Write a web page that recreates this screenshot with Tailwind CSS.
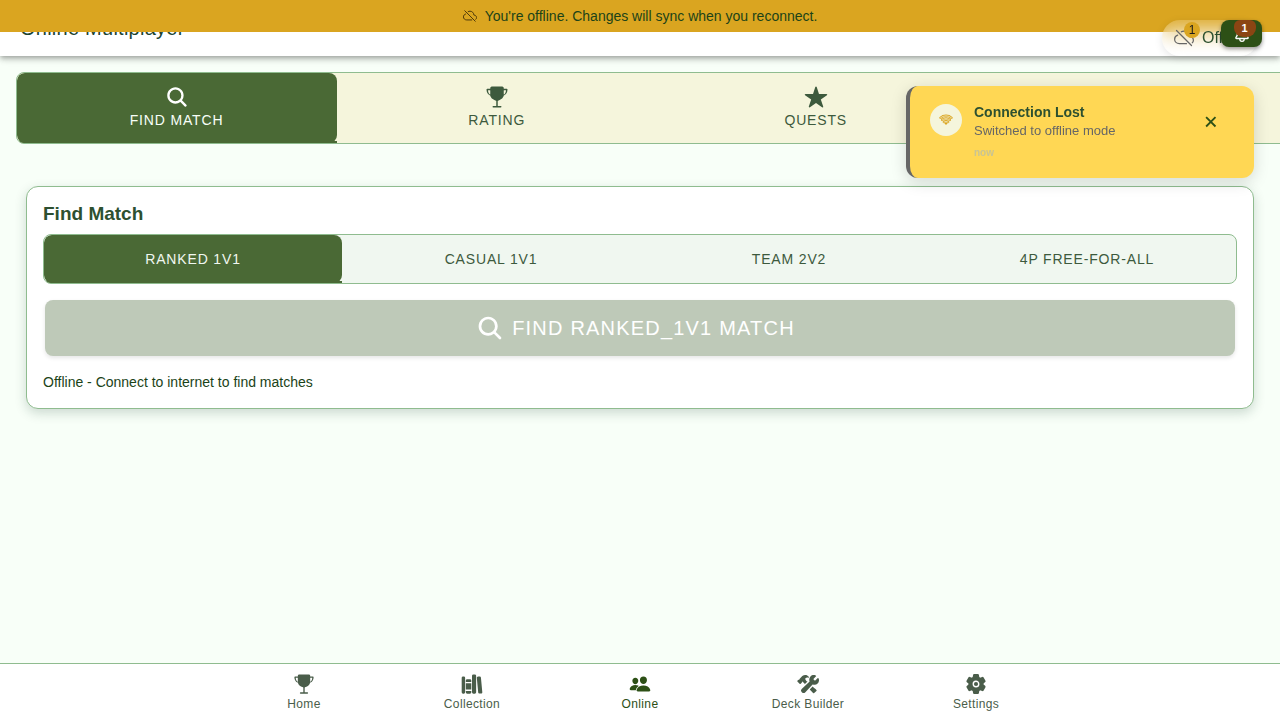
<!DOCTYPE html>
<html lang="en">
<head>
<meta charset="utf-8">
<title>Online Multiplayer</title>
<script src="https://cdn.jsdelivr.net/npm/@tailwindcss/browser@4"></script>
</head>
<body class="h-[720px] w-[1280px] overflow-hidden bg-[#f8fff8] font-['Liberation_Sans',Arial,sans-serif] text-[#1b4318]">
<svg class="hidden">
  <symbol id="search" viewBox="0 0 512 512"><path d="M456.69 421.39L362.6 327.3a173.81 173.81 0 0034.84-104.58C397.44 126.38 319.06 48 222.72 48S48 126.38 48 222.72s78.38 174.72 174.72 174.72A173.81 173.81 0 00327.3 362.6l94.09 94.09a25 25 0 0035.3-35.3zM97.92 222.72a124.8 124.8 0 11124.8 124.8 124.95 124.95 0 01-124.8-124.8z"/></symbol>
  <symbol id="trophy" viewBox="0 0 512 512"><path d="M464 80H403.9a4 4 0 01-4-4V64a32 32 0 00-32-32H144.37a32 32 0 00-32 32v12a4 4 0 01-4 4H48a16 16 0 00-16 16c0 54.53 30 112.45 76.52 125.35a7.82 7.82 0 015.55 5.9c5.77 26.89 23.52 52.5 51.41 73.61 20.91 15.83 45.85 27.5 68.27 32.48a8 8 0 016.25 7.8V444a4 4 0 01-4 4h-59.55c-8.61 0-16 6.62-16.43 15.23A16 16 0 00176 480h159.55c8.61 0 16-6.62 16.43-15.23A16 16 0 00336 448h-60a4 4 0 01-4-4V341.14a8 8 0 016.25-7.8c22.42-5 47.36-16.65 68.27-32.48 27.89-21.11 45.64-46.72 51.41-73.61a7.82 7.82 0 015.55-5.9C450 208.45 480 150.53 480 96a16 16 0 00-16-16zM112 198.22a4 4 0 01-6 3.45c-10.26-6.11-17.75-15.37-22.14-21.89-11.91-17.69-19-40.67-19.79-63.63a4 4 0 014-4.15h40a4 4 0 014 4zm316.13-18.44c-4.39 6.52-11.87 15.78-22.13 21.89a4 4 0 01-6-3.46V116a4 4 0 014-4h40a4 4 0 014 4.15c-.79 22.96-7.9 45.94-19.87 63.63z"/></symbol>
  <symbol id="star" viewBox="0 0 512 512"><path d="M394 480a16 16 0 01-9.39-3L256 383.76 127.39 477a16 16 0 01-24.55-18.08L153 310.35 23 221.2a16 16 0 019-29.2h160.38l48.4-148.95a16 16 0 0130.44 0l48.4 149H480a16 16 0 019.05 29.2L359 310.35l50.13 148.53A16 16 0 01394 480z"/></symbol>
  <symbol id="people" viewBox="0 0 512 512"><path d="M336 256c-20.56 0-40.44-9.18-56-25.84-15.13-16.25-24.37-37.92-26-61-1.74-24.62 5.77-47.26 21.14-63.76S312 80 336 80c23.83 0 45.38 9.06 60.7 25.52 15.47 16.62 23 39.22 21.26 63.63-1.67 23.11-10.9 44.77-26 61C376.44 246.82 356.57 256 336 256zM467.83 432H204.18a27.71 27.71 0 01-22-10.67 30.22 30.22 0 01-5.26-25.79c8.42-33.81 29.28-61.85 60.32-81.08C264.79 297.4 299.86 288 336 288c36.85 0 71 9 98.71 26.05 31.11 19.13 52 47.33 60.38 81.55a30.27 30.27 0 01-5.32 25.78A27.68 27.68 0 01467.83 432zM147 260c-35.19 0-66.13-32.72-69-72.93-1.42-20.6 5-39.65 18-53.62 12.86-13.83 31-21.45 51-21.45s38 7.66 50.93 21.57c13.1 14.08 19.5 33.09 18 53.52-2.87 40.2-33.8 72.91-68.93 72.91zM212.66 291.45c-17.59-8.6-40.42-12.9-65.65-12.9-29.46 0-58.07 7.68-80.57 21.62C40.93 316 23.77 339.05 16.84 366.88a27.39 27.39 0 004.79 23.36A25.32 25.32 0 0041.72 400h111a8 8 0 007.87-6.57c.11-.63.25-1.26.41-1.88 8.48-34.06 28.35-62.84 57.71-83.82a8 8 0 00-.63-13.39c-1.57-.92-3.37-1.89-5.42-2.89z"/></symbol>
  <symbol id="library" viewBox="0 0 512 512"><path d="M64 480H48a32 32 0 01-32-32V112a32 32 0 0132-32h16a32 32 0 0132 32v336a32 32 0 01-32 32zM240 176a32 32 0 00-32-32h-64a32 32 0 00-32 32v28a4 4 0 004 4h120a4 4 0 004-4zM112 448a32 32 0 0032 32h64a32 32 0 0032-32v-30a2 2 0 00-2-2H114a2 2 0 00-2 2zM114 240h124a2 2 0 012 2v140a2 2 0 01-2 2H114a2 2 0 01-2-2V242a2 2 0 012-2zM320 480h-32a32 32 0 01-32-32V64a32 32 0 0132-32h32a32 32 0 0132 32v384a32 32 0 01-32 32zM495.89 445.45l-32.23-340c-1.48-15.65-16.94-27-34.53-25.31l-31.85 3c-17.59 1.67-30.65 15.71-29.17 31.36l32.23 340c1.48 15.65 16.94 27 34.53 25.31l31.85-3c17.59-1.67 30.65-15.71 29.17-31.36z"/></symbol>
  <symbol id="construct" viewBox="0 0 512 512"><path d="M503.58 126.2a16.85 16.85 0 00-27.07-4.55l-51.15 51.15a11.15 11.15 0 01-15.66 0l-22.48-22.48a11.17 11.17 0 010-15.67l50.88-50.89a16.85 16.85 0 00-5.27-27.4c-39.71-17.37-89.08-7.45-120 23.29-26.81 26.61-34.83 68-22 113.7a11 11 0 01-3.16 11.1L114.77 365.1a56.76 56.76 0 1080.14 80.18L357 272.08a11 11 0 0110.9-3.17c45 12 86 4 112.43-22 15.2-15 25.81-36.17 29.89-59.71 3.83-22.2 1.41-44.44-6.64-61zM437.33 378.41c-13.94-11.59-43.72-38.4-74.07-66.22l-66.07 70.61c28.24 30 53.8 57.85 65 70l15.2 15.2a16 16 0 0022.6 0l52-52a16 16 0 000-22.6zM118.54 214.55a20.48 20.48 0 00-3-10.76 2.76 2.76 0 012.62-4.22c.9.09 5.39.74 11.76 4.61 4.73 2.87 18.23 12.08 41.73 35.54l7.22 22.12 66.23-61.55a33.73 33.73 0 00-21.6-9.2l-.86-.95-24.54-33.84a28.45 28.45 0 01-4-26.11 35.23 35.23 0 0111.78-16.35c5.69-4.41 18.53-9.72 29.44-10.62a52.92 52.92 0 0119.19 1.94 65.57 65.57 0 017.09 2.54 13 13 0 0013.15-21.09C265 76 254 66 239 56 205 40 160 40 123 71L64 131c-9 8-6 22-17 26-8 2-14 2-20 7l-13 13c-9 9-9 18 0 27l46 46c8 8 18 8 26 0l13-13c7-6 9-12 19.54-22.45z"/></symbol>
  <symbol id="settings" viewBox="0 0 512 512"><circle cx="256" cy="256" r="48"/><path d="M470.39 300l-.47-.38-31.56-24.75a16.11 16.11 0 01-6.1-13.33v-11.56a16 16 0 016.11-13.22L469.92 212l.47-.38a26.68 26.68 0 005.9-34.06l-42.71-73.9a1.59 1.59 0 01-.13-.22A26.86 26.86 0 00401 92.14l-.35.13-37.1 14.93a15.94 15.94 0 01-14.47-1.29q-4.92-3.1-10-5.86a15.94 15.94 0 01-8.19-11.82l-5.59-39.59-.12-.72A27.22 27.22 0 00298.76 26h-85.52a26.92 26.92 0 00-26.45 22.39l-.09.56-5.57 39.67a16 16 0 01-8.13 11.82 175.21 175.21 0 00-10 5.82 15.92 15.92 0 01-14.43 1.27l-37.13-15-.35-.14a26.87 26.87 0 00-32.48 11.34l-.13.22-42.77 73.95a26.71 26.71 0 005.9 34.1l.47.38 31.56 24.75a16.11 16.11 0 016.1 13.33v11.56a16 16 0 01-6.11 13.22L42.08 300l-.47.38a26.68 26.68 0 00-5.9 34.06l42.71 73.9a1.59 1.59 0 01.13.22 26.86 26.86 0 0032.45 11.3l.35-.13 37.07-14.93a15.94 15.94 0 0114.47 1.29q4.92 3.11 10 5.86a15.94 15.94 0 018.19 11.82l5.56 39.59.12.72A27.22 27.22 0 00213.24 486h85.52a26.92 26.92 0 0026.45-22.39l.09-.56 5.57-39.67a16 16 0 018.18-11.82c3.42-1.84 6.76-3.79 10-5.82a15.92 15.92 0 0114.43-1.27l37.13 14.95.35.14a26.85 26.85 0 0032.48-11.34 2.53 2.53 0 01.13-.22l42.71-73.89a26.7 26.7 0 00-5.89-34.11zm-134.48-40.24a80 80 0 11-83.66-83.67 80.21 80.21 0 0183.66 83.67z"/></symbol>
  <symbol id="cloud-offline" viewBox="0 0 512 512"><path fill="none" stroke="currentColor" stroke-width="32" stroke-linecap="round" stroke-linejoin="round" d="M93.72 183.25C49.49 198.05 16 233.1 16 288c0 66 54 112 120 112h184.37M467.82 377.22C485.24 363.93 496 341.42 496 312c0-59.82-53-85.76-96-88-8.89-89.54-71-144-144-144-26.16 0-48.79 6.93-67.6 18.14M448 448L64 64"/></symbol>
  <symbol id="wifi" viewBox="0 0 512 512"><g fill="none" stroke-linecap="round"><path stroke="currentColor" stroke-width="86" d="M332 330a115 115 0 00-152 0M394 254a205 205 0 00-276 0M458 176a300 300 0 00-404 0"/><path stroke="#f5f5dc" stroke-width="26" d="M332 330a115 115 0 00-152 0M394 254a205 205 0 00-276 0M458 176a300 300 0 00-404 0"/></g><path d="M315 376L256 440l-59-64a80 80 0 01118 0z"/></symbol>
  <symbol id="bell" viewBox="0 0 512 512"><path fill="none" stroke="currentColor" stroke-width="36" stroke-linecap="round" stroke-linejoin="round" d="M427.68 351.43C402 320 383.87 304 383.87 217.35 383.87 138 343.35 109.73 310 96c-4.43-1.82-8.6-6-9.95-10.55C294.2 65.54 277.8 48 256 48s-38.21 17.55-44 37.47c-1.35 4.6-5.52 8.71-9.95 10.53-33.39 13.75-73.87 41.92-73.87 121.35C128.13 304 110 320 84.32 351.43 73.68 364.45 83 384 101.61 384h308.88c18.51 0 27.77-19.61 17.19-32.57zM320 384v16a64 64 0 01-128 0v-16"/></symbol>
  <symbol id="close" viewBox="0 0 512 512"><path fill="none" stroke="currentColor" stroke-width="58" d="M400 400L100 100M400 100L100 400"/></symbol>
</svg>

<div class="relative flex h-full flex-col">
  <header class="relative z-10 flex h-14 shrink-0 items-center bg-white px-5 shadow-[0_2px_4px_-1px_rgba(0,0,0,0.2),0_4px_5px_0_rgba(0,0,0,0.14),0_1px_10px_0_rgba(0,0,0,0.12)]">
    <h1 class="text-[20px] font-medium tracking-[0.0125em] text-[#1b4332]">Online Multiplayer</h1>
  </header>

  <main class="flex-1 pt-4">
    <div class="ml-4 grid h-[72px] w-[1280px] grid-cols-4 overflow-hidden rounded-lg border border-[#8fbc8f] bg-[#f5f5dc] text-[14px] font-medium tracking-[0.06em] text-[#3d5a3d]">
      <div class="relative flex w-[320px] flex-col items-center rounded-lg bg-[#4a6935] pt-3 text-[#f8fff8]">
        <svg class="size-6 fill-current text-white"><use href="#search"/></svg><span class="mt-px mr-px leading-5">FIND MATCH</span>
        <span class="absolute inset-x-0 bottom-0 h-0.5 bg-[#4a6935]"></span>
      </div>
      <div class="flex flex-col items-center pt-3 pl-px"><svg class="size-6 fill-current"><use href="#trophy"/></svg><span class="mt-px leading-5">RATING</span></div>
      <div class="flex flex-col items-center pt-3"><svg class="size-6 fill-current"><use href="#star"/></svg><span class="mt-px leading-5">QUESTS</span></div>
      <div class="flex flex-col items-center pt-3"><svg class="size-6 fill-current"><use href="#star"/></svg></div>
    </div>

    <section class="mx-[26px] mt-[42px] h-[223px] rounded-xl border border-[#8fbc8f] bg-white px-4 pt-[15px] shadow-[0_4px_12px_rgba(27,67,50,0.2)]">
      <h2 class="text-[19px] leading-[23px] font-bold text-[#2d5030]">Find Match</h2>
      <div class="mt-[9px] grid h-[50px] grid-cols-4 overflow-hidden rounded-lg border border-[#8fbc8f] bg-[#f0f7f0] text-[14px] font-medium tracking-[0.06em] text-[#3d5a3d]">
        <div class="relative flex items-center justify-center rounded-lg bg-[#4a6935] text-[#f0f7f0]">RANKED 1V1<span class="absolute inset-x-0 bottom-0 h-0.5 bg-[#4a6935]"></span></div>
        <div class="flex items-center justify-center">CASUAL 1V1</div>
        <div class="flex items-center justify-center">TEAM 2V2</div>
        <div class="flex items-center justify-center">4P FREE-FOR-ALL</div>
      </div>
      <button class="mx-0.5 mt-4 flex h-14 w-[1190px] items-center justify-center gap-2 rounded-lg bg-[#bec9b8] pr-[9px] text-[20px] font-medium tracking-[0.06em] text-white shadow-[0_2px_4px_rgba(0,0,0,0.1)]"><svg class="size-7 fill-current"><use href="#search"/></svg>FIND RANKED_1V1 MATCH</button>
      <p class="mt-4 text-[14px] leading-5">Offline - Connect to internet to find matches</p>
    </section>
  </main>

  <nav class="flex h-[57px] shrink-0 justify-center border-t border-[#8fbc8f] bg-white text-[12px] tracking-[0.03em] text-[#4a5d4a]">
    <div class="flex w-[168px] flex-col items-center pt-[9px]"><svg class="size-[22px] fill-current"><use href="#trophy"/></svg><span class="mt-0.5 leading-[14px]">Home</span></div>
    <div class="flex w-[168px] flex-col items-center pt-[9px]"><svg class="size-[22px] fill-current"><use href="#library"/></svg><span class="mt-0.5 leading-[14px]">Collection</span></div>
    <div class="flex w-[168px] flex-col items-center pt-[9px] text-[#2d5016]"><svg class="size-[22px] fill-current"><use href="#people"/></svg><span class="mt-0.5 leading-[14px]">Online</span></div>
    <div class="flex w-[168px] flex-col items-center pt-[9px]"><svg class="size-[22px] fill-current"><use href="#construct"/></svg><span class="mt-0.5 leading-[14px]">Deck Builder</span></div>
    <div class="flex w-[168px] flex-col items-center pt-[9px]"><svg class="size-[22px] fill-current"><use href="#settings"/></svg><span class="mt-0.5 leading-[14px]">Settings</span></div>
  </nav>

  <!-- Offline banner over the header -->
  <div class="absolute inset-x-0 top-0 z-20 flex h-8 items-center justify-center gap-2 bg-[#daa520] text-[14px] text-[#1b4318]"><svg class="size-3.5 text-[#3a2c08]"><use href="#cloud-offline"/></svg>You're offline. Changes will sync when you reconnect.</div>

  <!-- Connection chip -->
  <div class="absolute top-5 left-[1162px] z-30 flex h-9 w-[96px] items-center gap-2 rounded-full bg-white/10 pl-3 text-[16px] text-[#2d5030] shadow-[0_2px_8px_rgba(0,0,0,0.1)] backdrop-blur-[10px]"><svg class="size-5 shrink-0 text-[#666]"><use href="#cloud-offline"/></svg>Offline
    <span class="absolute top-0.5 left-[22px] flex size-4 items-center justify-center rounded-full bg-[#daa520] text-[12px] font-medium text-[#1a1a1a]">1</span>
  </div>
  <div class="absolute top-5 left-[1221px] z-30 flex h-[27px] w-[41px] items-center justify-center rounded-lg bg-[#2d5016] text-white shadow-[0_2px_4px_rgba(0,0,0,0.4)]"><svg class="size-[18px]"><use href="#bell"/></svg>
    <span class="absolute top-0 left-[13px] flex h-[17px] w-[22px] items-center justify-center rounded-t-[6px] rounded-b-[9px] bg-[#8b4513] pr-px pb-px text-[11px] font-bold">1</span>
  </div>

  <!-- Toast -->
  <div class="absolute top-[86px] left-[906px] z-30 flex h-[92px] w-[348px] gap-3 rounded-xl border-l-4 border-[#666] bg-[#ffd754] pt-[18px] pl-5 shadow-[0_4px_16px_rgba(0,0,0,0.15)]">
    <div class="flex size-8 items-center justify-center rounded-full bg-[#f5f5dc] text-[#daa520]"><svg class="size-3.5 fill-current"><use href="#wifi"/></svg></div>
    <div class="flex-1"><p class="text-[14px] leading-[17px] font-bold text-[#2d5030]">Connection Lost</p><p class="mt-px text-[13px] leading-[18px] text-[#666]">Switched to offline mode</p><p class="mt-[7px] text-[10px] leading-3 font-bold text-[#c9c493]">now</p></div>
    <svg class="mt-2.5 mr-[35px] size-4 text-[#2d5016]"><use href="#close"/></svg>
  </div>
</div>
</body>
</html>
